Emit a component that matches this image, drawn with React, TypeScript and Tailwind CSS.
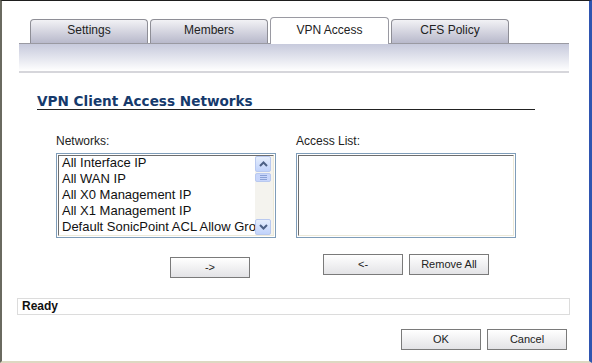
import React from "react";

const tabs = ["Settings", "Members", "VPN Access", "CFS Policy"];
const networks = [
  "All Interface IP",
  "All WAN IP",
  "All X0 Management IP",
  "All X1 Management IP",
  "Default SonicPoint ACL Allow Group",
];

function Btn({ label, w = "w-[80px]" }: { label: string; w?: string }) {
  return (
    <button
      className={`${w} h-[21px] border border-[#7a7a7a] bg-gradient-to-b from-white to-[#e3e3e6] text-[11px] text-[#222] leading-none`}
    >
      {label}
    </button>
  );
}

function ScrollBtn({ up }: { up: boolean }) {
  return (
    <div className="w-[16px] h-[16px] rounded-[2px] border border-[#b9c9ef] bg-gradient-to-b from-[#e6eefc] to-[#c1d3fb] flex items-center justify-center">
      <svg width="9" height="6" viewBox="0 0 9 6">
        <path
          d={up ? "M1 5 L4.5 1.5 L8 5" : "M1 1 L4.5 4.5 L8 1"}
          fill="none"
          stroke="#4d6185"
          strokeWidth="2"
        />
      </svg>
    </div>
  );
}

export default function App() {
  return (
    <div
      className="w-[592px] h-[363px] bg-white border-t border-t-[#1e1e1e] border-l-2 border-l-[#6a6a60] border-r-[3px] border-r-[#2f55b0] border-b-2 border-b-[#ddd8c2] overflow-hidden"
      style={{ fontFamily: '"Liberation Sans", Arial, sans-serif' }}
    >
      {/* tabs */}
      <div className="flex items-end gap-[2px] pl-[28px] h-[42px]">
        {tabs.map((t) =>
          t === "VPN Access" ? (
            <div
              key={t}
              className="w-[119px] h-[27px] -mb-[1px] pb-[2px] relative z-10 bg-white border border-b-0 border-[#9a9aa2] rounded-t-[4px] flex items-center justify-center text-[12px] text-[#222]"
            >
              {t}
            </div>
          ) : (
            <div
              key={t}
              className="w-[118px] h-[24px] pb-[3px] bg-gradient-to-b from-[#f2f2f5] to-[#b8b9cb] border border-b-0 border-[#8e8e96] rounded-t-[4px] flex items-center justify-center text-[12px] text-[#222]"
            >
              {t}
            </div>
          )
        )}
      </div>
      <div className="ml-[17px] w-[550px] h-[30px] border-t border-[#9a9aa2] border-b-2 border-b-[#d6d6db] bg-gradient-to-b from-[#c7cadc] to-white" />

      {/* heading */}
      <div
        className="ml-[35px] mt-[21px] w-[498px] border-b border-[#222] pb-[1px] text-[13.6px] leading-[14px] font-bold text-[#163a6c]"
        style={{ fontFamily: '"DejaVu Sans", Verdana, sans-serif' }}
      >
        VPN Client Access Networks
      </div>

      {/* lists */}
      <div className="flex gap-[20px] ml-[54px] mt-[23px]">
        <div className="w-[220px]">
          <div className="text-[12px] text-[#222] h-[16px] leading-[16px]">Networks:</div>
          <div className="mt-[4px] h-[85px] border border-[#7f9db9] p-[1px]">
            <div className="h-full border border-[#6e6e6e] border-r-[#ece9d8] border-b-[#ece9d8] flex">
              <div className="flex-1 overflow-hidden pl-[3px] -mt-[1px]">
                {networks.map((n) => (
                  <div key={n} className="text-[13px] leading-[16px] text-[#111] whitespace-nowrap">
                    {n}
                  </div>
                ))}
              </div>
              <div className="w-[18px] pr-[2px] bg-[#f4f3ee] flex flex-col justify-between">
                <div>
                  <ScrollBtn up />
                  <div className="w-[16px] h-[9px] mt-[1px] rounded-[2px] border border-[#b9c9ef] bg-[#c8d6fb] flex flex-col items-center justify-center gap-[1px]">
                    <div className="w-[7px] h-[1px] bg-[#8aa1d6]" />
                    <div className="w-[7px] h-[1px] bg-[#8aa1d6]" />
                    <div className="w-[7px] h-[1px] bg-[#8aa1d6]" />
                  </div>
                </div>
                <ScrollBtn up={false} />
              </div>
            </div>
          </div>
        </div>
        <div className="w-[220px]">
          <div className="text-[12px] text-[#222] h-[16px] leading-[16px]">Access List:</div>
          <div className="mt-[4px] h-[85px] border border-[#7f9db9] p-[1px]">
            <div className="h-full border border-[#6e6e6e] border-r-[#ece9d8] border-b-[#ece9d8]" />
          </div>
        </div>
      </div>

      {/* move buttons */}
      <div className="flex mt-[16px]">
        <div className="ml-[168px]">
          <Btn label="->" />
        </div>
        <div className="ml-[73px] flex gap-[6px]">
          <Btn label="<-" />
          <Btn label="Remove All" />
        </div>
      </div>

      {/* status */}
      <div className="ml-[15px] mt-[20px] w-[553px] h-[17px] border border-[#dcdcdc] pl-[4px] text-[12px] font-bold text-[#111] leading-[15px]">
        Ready
      </div>

      {/* footer */}
      <div className="flex justify-end gap-[6px] mr-[22px] mt-[14px]">
        <Btn label="OK" />
        <Btn label="Cancel" />
      </div>
    </div>
  );
}
